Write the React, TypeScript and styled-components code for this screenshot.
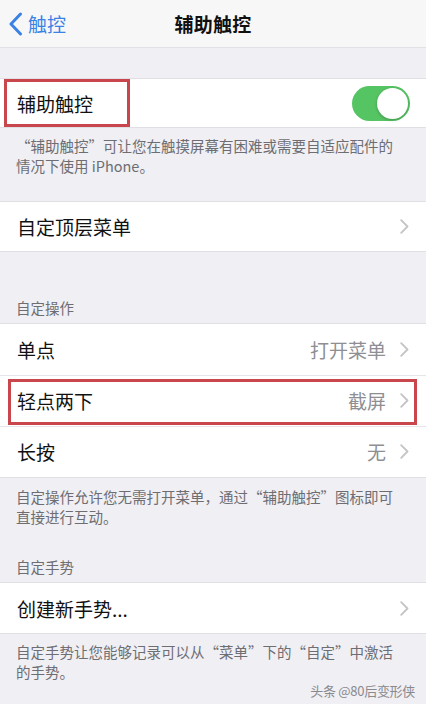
import { FC } from "react";
import styled, { createGlobalStyle } from "styled-components";

const GlobalStyle = createGlobalStyle`
html, body {
    margin:0;
    padding:0;
    background-color:#efeff4;
}
body {
    font-family:"Noto Sans CJK SC", "Noto Sans", "Liberation Sans", sans-serif;
    -webkit-font-smoothing:antialiased;
}
`

type RowProps = {
    label: string,
    value?: string,
    height: number,
    toggle?: boolean,
    mark?: MarkBox,
    divider?: boolean
}

type MarkBox = {
    left: number,
    top: number,
    width: number,
    height: number
}

const Chevron: FC = () => (
    <svg width="9" height="15" viewBox="0 0 9 15">
        <path d="M1.2 1.2 L7.5 7.5 L1.2 13.8" fill="none" stroke="#c4c4c8" strokeWidth="1.8" strokeLinecap="round" strokeLinejoin="round" />
    </svg>
)

const BackArrow: FC = () => (
    <svg width="15" height="24" viewBox="0 0 15 24">
        <path d="M12.5 2 L3 12 L12.5 22" fill="none" stroke="#3a82e4" strokeWidth="3" strokeLinecap="round" strokeLinejoin="round" />
    </svg>
)

const Row: FC<RowProps> = ({ label, value, height, toggle, mark, divider }) => {
    return (
        <StyledRow $h={height} $divider={!!divider}>
            <RowLabel>{label}</RowLabel>
            {toggle ? (
                <Switch><Knob /></Switch>
            ) : (
                <RowRight>
                    {value && <RowValue>{value}</RowValue>}
                    <Chevron />
                </RowRight>
            )}
            {mark && <Mark style={{ left: mark.left, top: mark.top, width: mark.width, height: mark.height }} />}
        </StyledRow>
    )
}

const App: FC = () => {
    return (
        <Page>
            <GlobalStyle />
            <NavBar>
                <BackButton>
                    <BackArrow />
                    <span>触控</span>
                </BackButton>
                <NavTitle>辅助触控</NavTitle>
            </NavBar>

            <Group $top={30}>
                <Row label="辅助触控" height={48} toggle mark={{ left: 4, top: 0, width: 126, height: 48 }} />
            </Group>
            <Footer $top={8}>
                “辅助触控”可让您在触摸屏幕有困难或需要自适应配件的情况下使用 iPhone。
            </Footer>

            <Group $top={26}>
                <Row label="自定顶层菜单" height={49} />
            </Group>

            <Header $top={46}>自定操作</Header>
            <Group $top={0}>
                <Row label="单点" value="打开菜单" height={51} />
                <Row label="轻点两下" value="截屏" height={51} divider mark={{ left: 8, top: 4, width: 409, height: 46 }} />
                <Row label="长按" value="无" height={51} divider />
            </Group>
            <Footer $top={9}>
                自定操作允许您无需打开菜单，通过“辅助触控”图标即可直接进行互动。
            </Footer>

            <Header $top={31}>自定手势</Header>
            <Group $top={0}>
                <Row label="创建新手势..." height={50} />
            </Group>
            <Footer $top={8}>
                自定手势让您能够记录可以从“菜单”下的“自定”中激活的手势。
            </Footer>

            <Watermark>头条 @80后变形侠</Watermark>
        </Page>
    )
}

export default App

const Page = styled.div`
position:relative;
display:flex;
flex-direction:column;
width:426px;
min-height:704px;
background-color:#efeff4;
overflow:hidden;
`

const NavBar = styled.div`
position:relative;
display:flex;
align-items:center;
justify-content:center;
height:47px;
background-color:#f7f7f8;
border-bottom:1px solid #e2e2e6;
`

const BackButton = styled.div`
position:absolute;
left:8px;
top:0;
bottom:0;
display:flex;
align-items:center;
gap:5px;
color:#3a82e4;
font-size:19px;
span {
    line-height:1;
}
`

const NavTitle = styled.div`
font-size:19px;
font-weight:600;
color:#111;
letter-spacing:0.2px;
`

const Group = styled.div<{ $top: number }>`
display:flex;
flex-direction:column;
margin-top:${props => props.$top}px;
background-color:#fff;
border-top:1px solid #e0e0e4;
border-bottom:1px solid #e0e0e4;
`

const StyledRow = styled.div<{ $h: number, $divider: boolean }>`
position:relative;
display:flex;
align-items:center;
justify-content:space-between;
height:${props => props.$h}px;
padding:0 17px 0 17px;
box-shadow:${props => props.$divider ? 'inset 0 1px 0 0 #e6e6ea' : 'none'};
`

const RowLabel = styled.div`
font-size:19px;
color:#111;
`

const RowRight = styled.div`
display:flex;
align-items:center;
gap:14px;
`

const RowValue = styled.div`
font-size:19px;
color:#8e8e93;
`

const Switch = styled.div`
display:flex;
align-items:center;
justify-content:flex-end;
width:58px;
height:35px;
margin-right:-1px;
padding:2px;
box-sizing:border-box;
border-radius:18px;
background-color:#55c463;
`

const Knob = styled.div`
width:31px;
height:31px;
border-radius:50%;
background-color:#fff;
box-shadow:0 1px 3px rgba(0, 0, 0, 0.25);
`

const Mark = styled.div`
position:absolute;
box-sizing:border-box;
border:3px solid #c9464c;
pointer-events:none;
`

const Footer = styled.div<{ $top: number }>`
margin-top:${props => props.$top}px;
padding:0 28px 0 16px;
font-size:14.5px;
line-height:19.5px;
color:#6d6d72;
`

const Header = styled.div<{ $top: number }>`
margin-top:${props => props.$top}px;
padding:0 16px 6px;
font-size:14.5px;
line-height:19px;
color:#6d6d72;
`

const Watermark = styled.div`
position:absolute;
right:11px;
bottom:6px;
font-size:13px;
line-height:14px;
color:#8a8a8e;
letter-spacing:-0.3px;
`
